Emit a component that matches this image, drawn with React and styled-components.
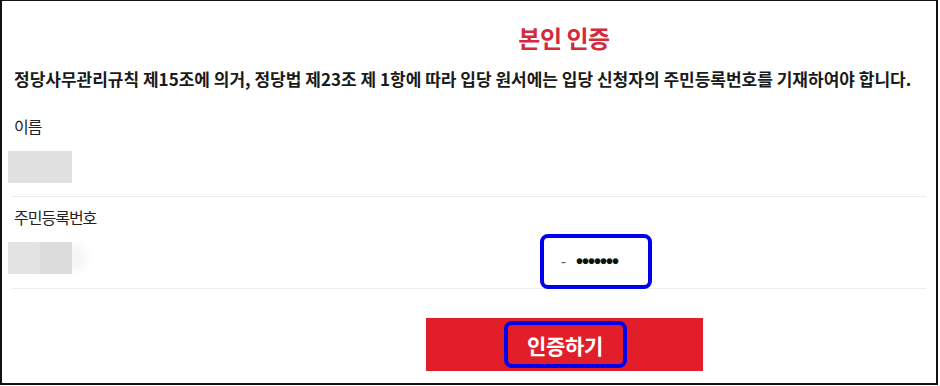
import styled, { createGlobalStyle } from "styled-components";

const GlobalStyle = createGlobalStyle`
  html, body {
    margin: 0;
    padding: 0;
    background: #ffffff;
  }
  body {
    font-family: "Noto Sans CJK KR", "Noto Sans", sans-serif;
    color: #222222;
  }
`;

const Frame = styled.div`
  box-sizing: border-box;
  width: 938px;
  height: 385px;
  border: 2px solid #111111;
  border-top-width: 1px;
  background: #ffffff;
  padding: 0 6px 0 6px;
  display: flex;
  flex-direction: column;
`;

const Centered = styled.div`
  display: flex;
  justify-content: center;
  padding-left: 190px;
`;

const Title = styled.h1`
  margin: 21px 0 0 0;
  font-size: 24px;
  line-height: 32px;
  font-weight: 700;
  color: #d42a3c;
  letter-spacing: -0.5px;
`;

const Notice = styled.p`
  margin: 12px 0 0 6px;
  font-size: 17px;
  line-height: 26px;
  font-weight: 700;
  color: #1a1a1a;
  letter-spacing: 0;
  white-space: nowrap;
`;

const Field = styled.div`
  display: flex;
  flex-direction: column;
  border-bottom: 1px solid #ececec;
  margin-left: 4px;
  margin-right: 4px;
`;

const Label = styled.div`
  margin: ${(p) => p.$top}px 0 0 2px;
  font-size: 16px;
  line-height: 22px;
  color: #222222;
  letter-spacing: -1px;
`;

const InputRow = styled.div`
  display: flex;
  align-items: center;
  height: ${(p) => p.$height}px;
  margin-left: -4px;
`;

const Blurred = styled.div`
  width: 64px;
  height: 32px;
  background: ${(p) =>
    p.$split
      ? "linear-gradient(90deg, #e3e3e3 0 32px, #dcdcdc 32px 64px)"
      : "#e1e1e1"};
  box-shadow: ${(p) => (p.$split ? "18px 0 10px -4px #f6f6f6" : "none")};
`;

const Highlight = styled.div`
  box-sizing: border-box;
  align-self: flex-end;
  margin-left: ${(p) => p.$offset}px;
  margin-bottom: -1px;
  width: 112px;
  height: 55px;
  border: 4px solid #0000ee;
  border-radius: 8px;
  background: #ffffff;
  display: flex;
  align-items: center;
  padding-left: 17px;
  gap: 10px;
  font-family: "Liberation Sans", Arial, sans-serif;
  color: #111111;
`;

const Dash = styled.span`
  color: #555555;
  font-size: 15px;
`;

const Dots = styled.span`
  font-weight: 700;
  letter-spacing: -1px;
  font-size: 20px;
`;

const ButtonArea = styled.div`
  display: flex;
  justify-content: center;
  padding-left: 190px;
  margin-top: 29px;
`;

const SubmitButton = styled.button`
  width: 277px;
  height: 53px;
  border: none;
  background: #e31e2b;
  display: flex;
  align-items: center;
  padding: 0 0 0 78px;
  cursor: pointer;
`;

const ButtonLabel = styled.span`
  box-sizing: border-box;
  height: 47px;
  width: 123px;
  border: 4px solid #0000ee;
  border-radius: 8px;
  display: flex;
  align-items: center;
  justify-content: center;
  color: #ffffff;
  font-family: "Noto Sans CJK KR", sans-serif;
  font-size: 21px;
  font-weight: 700;
  letter-spacing: -0.3px;
`;

export default function App() {
  return (
    <>
      <GlobalStyle />
      <Frame>
        <Centered>
          <Title>본인 인증</Title>
        </Centered>
        <Notice>
          정당사무관리규칙 제15조에 의거, 정당법 제23조 제 1항에 따라 입당
          원서에는 입당 신청자의 주민등록번호를 기재하여야 합니다.
        </Notice>
        <Field>
          <Label $top={23}>이름</Label>
          <InputRow $height={59}>
            <Blurred />
          </InputRow>
        </Field>
        <Field>
          <Label $top={9}>주민등록번호</Label>
          <InputRow $height={60}>
            <Blurred $split />
            <Highlight $offset={468}>
              <Dash>-</Dash>
              <Dots>•••••••</Dots>
            </Highlight>
          </InputRow>
        </Field>
        <ButtonArea>
          <SubmitButton type="button">
            <ButtonLabel>인증하기</ButtonLabel>
          </SubmitButton>
        </ButtonArea>
      </Frame>
    </>
  );
}
